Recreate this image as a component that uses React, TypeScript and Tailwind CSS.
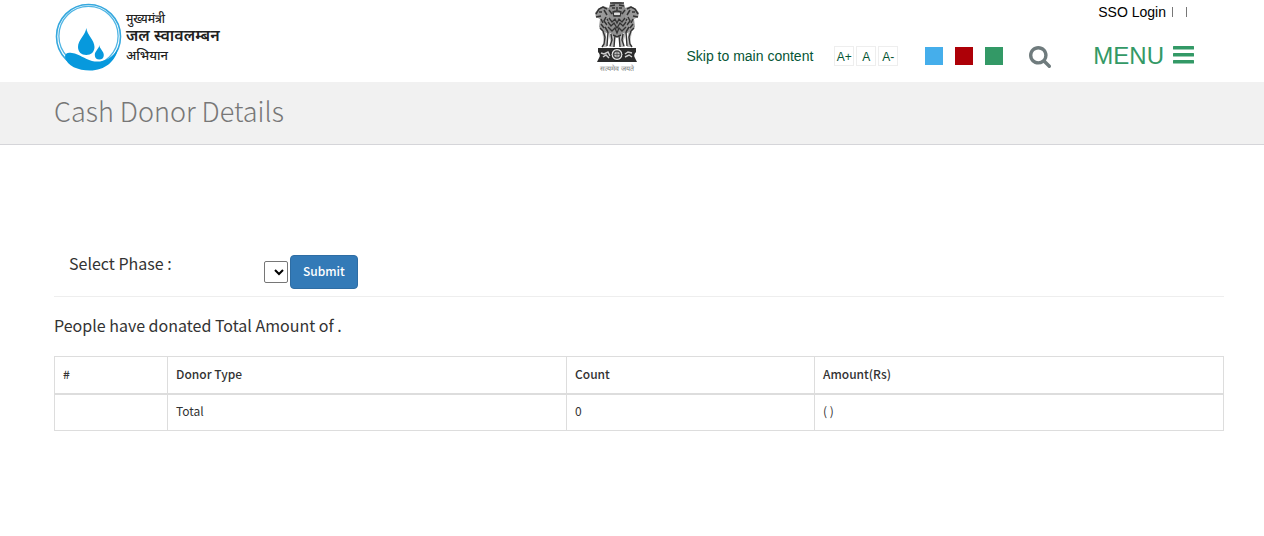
const sourceSans = "font-['Noto_Sans_CJK_SC','Open_Sans',sans-serif]";

const themes = [
  { name: 'Blue theme', color: 'bg-[#45aeeb]' },
  { name: 'Red theme', color: 'bg-[#ad0007]' },
  { name: 'Green theme', color: 'bg-[#339966]' },
];

const textSizes = [
  { label: 'A+', title: 'Increase text size' },
  { label: 'A', title: 'Normal text size' },
  { label: 'A-', title: 'Decrease text size' },
];

function Logo() {
  return (
    <a href="#" className="mr-auto flex items-start gap-1 text-[#222] no-underline">
      <svg viewBox="0 0 68 70" className="mt-px h-[70px] w-[68px]" aria-hidden="true">
        <circle cx="34.5" cy="35.5" r="32" fill="none" stroke="#35a8de" strokeWidth="1.6" />
        <circle cx="34.5" cy="35" r="29.6" fill="none" stroke="#4fb5e4" strokeWidth="1.3" />
        <path
          d="M11 56 C11 52 14 51 18 52 C26 53 30 58 38 60 C47 62 58 59 64 47 C62 60 51 69.500 36 69.500 C24 69.500 13 65 11 56 Z"
          fill="#0799dd"
        />
        <path
          d="M32.300 27 C33 34 40.500 39 40.500 46 C40.500 51 37 54 32.300 54 C27.500 54 24 51 24 46 C24 39 31.500 34 32.300 27 Z"
          fill="#0799dd"
        />
        <path
          d="M45.300 44 C45.600 48 49.800 50 49.800 54 C49.800 57 48 58.600 45.300 58.600 C42.700 58.600 40.800 57 40.800 54 C40.800 50 45 48 45.300 44 Z"
          fill="#0799dd"
        />
      </svg>
      <span className="flex flex-col pt-3 font-['Noto_Sans_Devanagari','Noto_Sans',sans-serif]">
        <span className="text-xs leading-4 font-medium">मुख्यमंत्री</span>
        <span className="text-base leading-5 font-semibold">जल स्वावलम्बन</span>
        <span className="text-[13px] leading-[18px] font-medium">अभियान</span>
      </span>
    </a>
  );
}

function Emblem() {
  return (
    <svg viewBox="0 0 46 72" className="h-[72px] w-[46px] shrink-0" role="img" aria-label="State emblem">
      {/* side lions */}
      <path d="M4 9 L9 6 L15 8 L18 20 L16 34 L9 32 L5 27 L6 19 L2 17 L1 13 Z" fill="#999" />
      <path d="M42 9 L37 6 L31 8 L28 20 L30 34 L37 32 L41 27 L40 19 L44 17 L45 13 Z" fill="#999" />
      <path
        d="M2 14 L5 9 L9 7 L13 9 M2 17 L7 16 M5 12 H8 M10 10 L13 15 M7 19 L9 23 M12 17 L10 21 L13 25 M7 24 L10 28 M6 28 L9 31 M11 27 L14 32 M13 19 L16 23"
        stroke="#333"
        strokeWidth="1.5"
        fill="none"
      />
      <path
        d="M44 14 L41 9 L37 7 L33 9 M44 17 L39 16 M41 12 H38 M36 10 L33 15 M39 19 L37 23 M34 17 L36 21 L33 25 M39 24 L36 28 M40 28 L37 31 M35 27 L32 32 M33 19 L30 23"
        stroke="#333"
        strokeWidth="1.5"
        fill="none"
      />
      {/* front lion */}
      <path d="M16 4 L19 2 H27 L30 4 L32 10 L31 17 L33 27 L28 36 H18 L13 27 L15 17 L14 10 Z" fill="#909090" />
      <path
        d="M16 3 H30 M16 6 L21 5 M30 6 L25 5 M15 10 L18 14 M31 10 L28 14 M18 8 H21 M25 8 H28 M23 7 V11 M19 12 Q23 10 27 12 L26 16 H20 Z"
        stroke="#333"
        strokeWidth="1.4"
        fill="none"
      />
      <path d="M20 14 H26" stroke="#fff" strokeWidth="1.4" />
      <path
        d="M15 18 L18 22 L21 19 L23 23 L25 19 L28 22 L31 18 M14 22 L17 26 L20 23 L23 28 L26 23 L29 26 L32 22 M14 27 L18 31 L21 28 L23 33 L25 28 L28 31 L32 27"
        stroke="#333"
        strokeWidth="1.3"
        fill="none"
      />
      {/* legs */}
      <path d="M8 31 L12 33 L13 47 H8 L10 43 Z M14 33 L20 35 L20 47 H15 L17 43 Z M32 33 L26 35 L26 47 H31 L29 43 Z M38 31 L34 33 L33 47 H38 L36 43 Z" fill="#bbb" />
      <path
        d="M9 31 L11 37 L10 44 L8 47 M14 32 L13 46 M17 34 L18 40 L16 46 M21 35 L20 47 M25 35 L26 47 M29 34 L28 40 L30 46 M32 32 L33 46 M37 31 L35 37 L36 44 L38 47 M19 35 L23 37 L27 35"
        stroke="#333"
        strokeWidth="1.4"
        fill="none"
      />
      {/* abacus with the wheel */}
      <path d="M4 48 H42 L42 52 Q39 55 41 58 L43 62 H3 L5 58 Q7 55 4 52 Z" fill="#2b2b2b" />
      <path d="M7 53 L10 54 L14 52 L16 56 M9 57 L12 55 L15 58 M31 54 L34 52 L38 53 M31 57 L35 55 L38 57" stroke="#ccc" strokeWidth="1.5" fill="none" />
      <circle cx="23" cy="54.500" r="6" fill="#e4e4e4" stroke="#111" />
      <circle cx="23" cy="54.500" r="3.500" fill="#bbb" stroke="#444" strokeWidth="1.500" />
      <path d="M23 51 V58 M19.500 54.500 H26.500" stroke="#444" strokeWidth="0.7" />
      <text x="23" y="71" fontSize="7" textAnchor="middle" fill="#777">
        सत्यमेव जयते
      </text>
    </svg>
  );
}

function Header() {
  return (
    <header className="flex h-[82px] items-start pr-[70px] pl-[54px]">
      <Logo />
      <Emblem />
      <div className="ml-[46px] flex flex-col items-end">
        <div className="flex h-6 items-center pr-[7px] text-sm text-black">
          <a href="#">SSO Login</a>
          <span className="ml-[6px] h-[10px] w-px bg-[#777]" />
          <span className="ml-[13px] h-[10px] w-px bg-[#777]" />
        </div>
        <div className="mt-4 flex h-8 items-center">
          <a href="#main" className="text-sm text-[#065535]">
            Skip to main content
          </a>
          <div className="ml-[21px] flex gap-[2px]">
            {textSizes.map((size) => (
              <button
                key={size.label}
                type="button"
                title={size.title}
                className="h-5 w-5 border border-[#eee] text-center text-xs leading-5 text-[#065535]"
              >
                {size.label}
              </button>
            ))}
          </div>
          <div className="ml-[27px] flex gap-3">
            {themes.map((theme) => (
              <button key={theme.name} type="button" aria-label={theme.name} className={`size-[18px] ${theme.color}`} />
            ))}
          </div>
          <button type="button" aria-label="Search" className="ml-[26px] pt-px">
            <svg viewBox="0 128 1664 1664" className="size-[22px] fill-[#6f7b7d]">
              <path d="M1152 832q0-185-131.5-316.5t-316.5-131.5-316.5 131.5-131.5 316.5 131.5 316.5 316.5 131.5 316.5-131.5 131.5-316.5zm512 832q0 52-38 90t-90 38q-54 0-90-38l-343-342q-179 124-399 124-143 0-273.5-55.5t-225-150-150-225-55.5-273.5 55.5-273.5 150-225 225-150 273.5-55.5 273.5 55.5 225 150 150 225 55.5 273.5q0 220-124 399l343 343q37 37 37 90z" />
            </svg>
          </button>
          <button type="button" className="ml-[42px] flex items-center gap-[9px] text-2xl leading-8 text-[#339966]">
            MENU
            <svg viewBox="0 0 21 21" className="size-[21px] fill-current" aria-hidden="true">
              <rect y="0" width="21" height="3.4" rx="0.5" />
              <rect y="7" width="21" height="3.4" rx="0.5" />
              <rect y="14" width="21" height="3.4" rx="0.5" />
            </svg>
          </button>
        </div>
      </div>
    </header>
  );
}

function PhaseForm() {
  return (
    <form className="flex items-start border-b border-[#eee] pb-[7px] pl-[15px]">
      <label htmlFor="phase" className="w-[195px] text-base leading-4 text-[#333]">
        Select Phase :
      </label>
      <select
        id="phase"
        className="mt-[6px] h-[22px] w-6 rounded-[2px] border border-[#767676] bg-white text-[13px] text-black"
      />
      <button
        type="submit"
        className="ml-[2px] h-[34px] rounded border border-[#2e6da4] bg-[#337ab7] px-3 pb-[2px] text-xs font-medium text-white"
      >
        Submit
      </button>
    </form>
  );
}

function DonorTable() {
  return (
    <table className="mt-5 w-full table-fixed border-collapse border border-[#ddd] text-left text-xs leading-5 text-[#333]">
      <colgroup>
        <col className="w-[113px]" />
        <col className="w-[399px]" />
        <col className="w-[248px]" />
        <col />
      </colgroup>
      <thead>
        <tr className="border-b-2 border-[#ddd]">
          {['#', 'Donor Type', 'Count', 'Amount(Rs)'].map((heading) => (
            <th key={heading} scope="col" className="border-x border-[#ddd] px-2 pt-[7px] pb-[9px] font-medium">
              {heading}
            </th>
          ))}
        </tr>
      </thead>
      <tbody>
        <tr>
          <td className="border border-[#ddd] px-2 pt-[6px] pb-[9px]" />
          <td className="border border-[#ddd] px-2 pt-[6px] pb-[9px]">Total</td>
          <td className="border border-[#ddd] px-2 pt-[6px] pb-[9px]">0</td>
          <td className="border border-[#ddd] px-2 pt-[6px] pb-[9px]">( )</td>
        </tr>
      </tbody>
    </table>
  );
}

export default function App() {
  return (
    <div className="bg-white font-['Liberation_Sans',Arial,sans-serif]">
      <Header />
      <div className="border-b border-[#d5d5d9] bg-[#f1f1f1] pt-[9px] pb-[13px] pl-[54px]">
        <h1 className={`text-[27px] leading-10 font-light text-[#777] ${sourceSans}`}>Cash Donor Details</h1>
      </div>
      <main id="main" className={`pt-[110px] pr-10 pb-12 pl-[54px] ${sourceSans}`}>
        <PhaseForm />
        <p className="mt-[18px] mb-[21px] text-base leading-5 text-[#333]">People have donated Total Amount of .</p>
        <DonorTable />
      </main>
    </div>
  );
}
